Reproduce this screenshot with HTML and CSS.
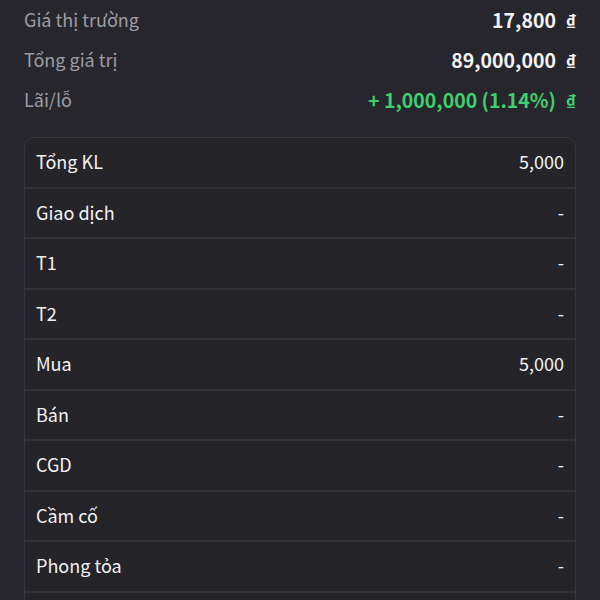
FILE: index.html
```html
<!DOCTYPE html>
<html lang="vi">
  <head>
    <meta charset="UTF-8" />
    <meta name="viewport" content="width=device-width, initial-scale=1.0" />
    <title>Chi tiết</title>
    <link rel="stylesheet" href="styles.css">
  </head>
  <body>
    <div class="summary">
      <div class="sum-line">
        <span class="label">Giá thị trường</span>
        <span class="value">17,800 <i class="cur">₫</i></span>
      </div>
      <div class="sum-line">
        <span class="label">Tổng giá trị</span>
        <span class="value">89,000,000 <i class="cur">₫</i></span>
      </div>
      <div class="sum-line">
        <span class="label">Lãi/lỗ</span>
        <span class="value up">+ 1,000,000 (1.14%) <i class="cur">₫</i></span>
      </div>
    </div>

    <div class="card">
      <div class="row"><span>Tổng KL</span><span>5,000</span></div>
      <div class="row"><span>Giao dịch</span><span>-</span></div>
      <div class="row"><span>T1</span><span>-</span></div>
      <div class="row"><span>T2</span><span>-</span></div>
      <div class="row"><span>Mua</span><span>5,000</span></div>
      <div class="row"><span>Bán</span><span>-</span></div>
      <div class="row"><span>CGD</span><span>-</span></div>
      <div class="row"><span>Cầm cố</span><span>-</span></div>
      <div class="row"><span>Phong tỏa</span><span>-</span></div>
      <div class="row"><span>Chờ về</span><span>-</span></div>
    </div>
  </body>
</html>
```

FILE: styles.css
```css
* {
  box-sizing: border-box;
}
html,
body {
  margin: 0;
  padding: 0;
  height: 100%;
}

body {
  background: #27262c;
  color: #f2f2f4;
  font-family: "Noto Sans CJK SC", "Noto Sans", sans-serif;
  font-size: 18px;
  padding: 0 24px 0 24px;
  overflow: hidden;
}

.summary {
  margin-top: -1px;
}
.sum-line {
  display: flex;
  justify-content: space-between;
  align-items: center;
  height: 40px;
}
.sum-line .label {
  color: #9c9ca4;
}
.sum-line .value {
  font-size: 19.5px;
  font-weight: 600;
  color: #f4f4f6;
}
.sum-line .value.up {
  color: #3ecf6e;
}
.cur {
  font-style: normal;
  font-size: 18px;
  margin-left: 5px;
}

.card {
  margin-top: 18px;
  border: 1px solid #38373e;
  border-radius: 10px;
  background: #252429;
}
.row {
  display: flex;
  justify-content: space-between;
  align-items: center;
  height: 50.5px;
  padding: 0 11px 2px 11px;
  border-bottom: 2px solid #323138;
}
.row:last-child {
  border-bottom: none;
}
```
